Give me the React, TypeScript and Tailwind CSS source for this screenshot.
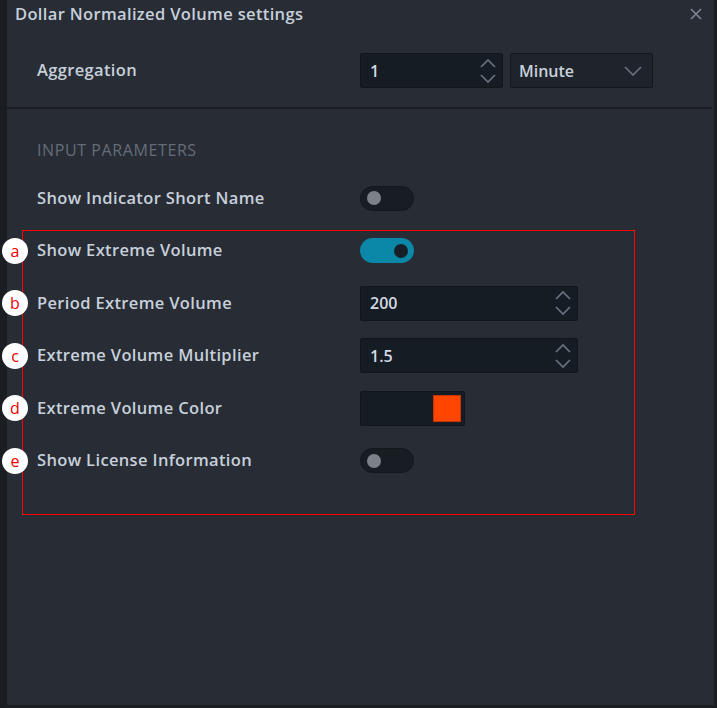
import React from 'react';

const font = { fontFamily: '"Open Sans", "Noto Sans", sans-serif' };

const Chevrons = () => (
  <svg width="18" height="28" viewBox="0 0 18 28" fill="none" stroke="#6b7380" strokeWidth="1.6">
    <path d="M2 10 L9 3 L16 10" />
    <path d="M2 18 L9 25 L16 18" />
  </svg>
);

const Toggle = ( { on }: { on?: boolean } ) => (
  <div className={ "w-[54px] h-[25px] rounded-full flex items-center px-[6px] " +
    ( on ? "bg-[#0b87a8] justify-end" : "bg-[#181d24] border border-[#13171c] justify-start" ) }>
    <div className={ "w-[14px] h-[14px] rounded-full " + ( on ? "bg-[#172029]" : "bg-[#7c8088]" ) }/>
  </div>
);

const NumberBox = ( { value, w }: { value: string; w: string } ) => (
  <div className={ "h-[35px] bg-[#161c24] border border-[#12161b] rounded-[2px] flex items-center justify-between pl-[9px] pr-[5px] " + w }>
    <span className="text-[16px] font-semibold text-[#d3dae3]">{ value }</span>
    <Chevrons/>
  </div>
);

const Marker = ( { letter }: { letter: string } ) => (
  <div className="absolute left-[-35px] top-1/2 -translate-y-1/2 w-[26px] h-[26px] rounded-full bg-white flex items-center justify-center text-[#ee0000] text-[16px] leading-none">
    { letter }
  </div>
);

const labelCls = "text-[16.5px] tracking-[0.35px] font-semibold text-[#c7d0da]"

const Row = ( { label, letter, children }: { label: string; letter?: string; children: React.ReactNode } ) => (
  <div className="relative h-[52.5px] flex items-center">
    { letter && <Marker letter={ letter }/> }
    <div className={ "w-[323px] " + labelCls }>{ label }</div>
    { children }
  </div>
);

export default function App() {
  return (
    <div className="w-[717px] h-[708px] flex bg-[#1b1f24]" style={ font }>
      <div className="w-[7px] bg-[#1a1e22]"/>
      <div className="flex-1 flex flex-col bg-[#272c35] mb-[3px] mr-[3px]">
        {/* header */ }
        <div className="h-[28px] flex items-center justify-between pl-[8px] pr-[12px]">
          <h1 className={ labelCls }>Dollar Normalized Volume settings</h1>
          <svg width="12" height="12" viewBox="0 0 12 12" stroke="#7b8494" strokeWidth="1.6">
            <path d="M1 1 L11 11 M11 1 L1 11"/>
          </svg>
        </div>

        <div className="h-[81px] flex items-center pl-[30px] border-b-2 border-[#1a1e24] pt-[6px] mr-[2px]">
          <div className={ "w-[323px] " + labelCls }>Aggregation</div>
          <NumberBox value="1" w="w-[143px]"/>
          <div className="ml-[7px] w-[143px] h-[35px] bg-[#1f242c] border border-[#14181d] rounded-[2px] flex items-center justify-between pl-[8px] pr-[10px]">
            <span className="text-[16px] font-semibold text-[#c7d0da]">Minute</span>
            <svg width="18" height="10" viewBox="0 0 18 10" fill="none" stroke="#6b7380" strokeWidth="1.6">
              <path d="M1 1 L9 9 L17 1"/>
            </svg>
          </div>
        </div>

        <div className="pl-[30px] pt-[32px]">
          <div className="text-[16px] tracking-[0.6px] text-[#656c78] h-[18px] leading-[18px]">INPUT PARAMETERS</div>
          <div className="mt-[13px]">
            <Row label="Show Indicator Short Name"><Toggle/></Row>
          </div>
          <div className="relative mt-[5px] ml-[-15px] w-[613px] h-[285px] border border-[#ff0000] pl-[14px]">
            <div className="mt-[-6px]">
              <Row label="Show Extreme Volume" letter="a"><Toggle on/></Row>
              <Row label="Period Extreme Volume" letter="b"><NumberBox value="200" w="w-[218px]"/></Row>
              <Row label="Extreme Volume Multiplier" letter="c"><NumberBox value="1.5" w="w-[218px]"/></Row>
              <Row label="Extreme Volume Color" letter="d">
                <div className="w-[105px] h-[35px] bg-[#161c24] border border-[#12161b] rounded-[2px] flex items-center justify-end pr-[3px]">
                  <div className="w-[28px] h-[27px] bg-[#ff4500] border border-[#c43600]"/>
                </div>
              </Row>
              <Row label="Show License Information" letter="e"><Toggle/></Row>
            </div>
          </div>
        </div>
      </div>
    </div>
  );
}
